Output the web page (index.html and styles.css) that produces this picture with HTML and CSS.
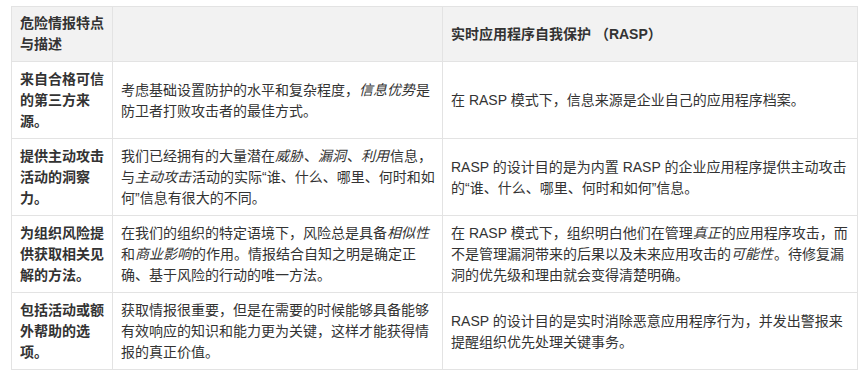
FILE: index.html
```html
<!DOCTYPE html>
<html lang="zh-CN">
<head>
<meta charset="utf-8">
<title>RASP</title>
<link rel="stylesheet" href="styles.css">
</head>
<body>
<table class="grid">
  <colgroup>
    <col class="c1">
    <col class="c2">
    <col class="c3">
  </colgroup>
  <thead>
    <tr>
      <th class="first">危险情报特点与描述</th>
      <th class="mid"></th>
      <th class="last">实时应用程序自我保护 （RASP）</th>
    </tr>
  </thead>
  <tbody>
    <tr>
      <td class="first">来自合格可信的第三方来源。</td>
      <td class="mid">考虑基础设置防护的水平和复杂程度，<em>信息优势</em>是防卫者打败攻击者的最佳方式。</td>
      <td class="last">在 RASP 模式下，信息来源是企业自己的应用程序档案。</td>
    </tr>
    <tr>
      <td class="first">提供主动攻击活动的洞察力。</td>
      <td class="mid">我们已经拥有的大量潜在<em>威胁</em>、<em>漏洞</em>、<em>利用</em>信息，与<em>主动攻击</em>活动的实际“谁、什么、哪里、何时和如何”信息有很大的不同。</td>
      <td class="last">RASP 的设计目的是为内置 RASP 的企业应用程序提供主动攻击的“谁、什么、哪里、何时和如何”信息。</td>
    </tr>
    <tr>
      <td class="first">为组织风险提供获取相关见解的方法。</td>
      <td class="mid">在我们的组织的特定语境下，风险总是具备<em>相似性</em>和<em>商业影响</em>的作用。情报结合自知之明是确定正确、基于风险的行动的唯一方法。</td>
      <td class="last">在 RASP 模式下，组织明白他们在管理<em>真正</em>的应用程序攻击，而不是管理漏洞带来的后果以及未来应用攻击的<em>可能性</em>。待修复漏洞的优先级和理由就会变得清楚明确。</td>
    </tr>
    <tr>
      <td class="first">包括活动或额外帮助的选项。</td>
      <td class="mid">获取情报很重要，但是在需要的时候能够具备能够有效响应的知识和能力更为关键，这样才能获得情报的真正价值。</td>
      <td class="last">RASP 的设计目的是实时消除恶意应用程序行为，并发出警报来提醒组织优先处理关键事务。</td>
    </tr>
  </tbody>
</table>
</body>
</html>
```
FILE: styles.css
```css
html, body {
  background: #ffffff;
}
body {
  margin: 0;
  padding: 6px 0 0 11px;
  font-family: "Liberation Sans", "Noto Sans CJK SC", sans-serif;
  font-size: 14px;
  line-height: 21px;
  color: #333333;
}
.grid {
  border-collapse: collapse;
  table-layout: fixed;
  width: 846px;
}
.c1 { width: 101px; }
.c2 { width: 330px; }
.c3 { width: 415px; }
.grid th,
.grid td {
  border: 1px solid #e3e3e3;
  text-align: left;
  vertical-align: middle;
  padding: 7px 6px 6px 8px;
}
.grid th {
  background: #f2f2f2;
  font-weight: bold;
  padding-top: 6px;
  padding-bottom: 6px;
}
.grid td.first {
  font-weight: bold;
}
.grid .last {
  padding-right: 3px;
}
.grid em {
  font-style: italic;
  padding-right: 1px;
}
```
